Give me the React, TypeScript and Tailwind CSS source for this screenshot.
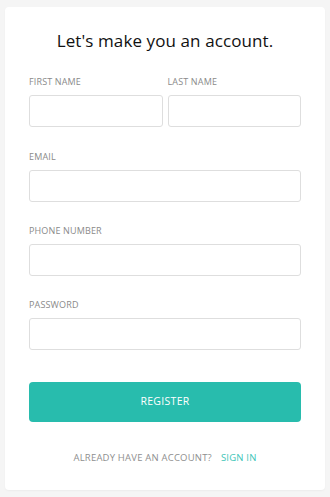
import { useState } from 'react';

const Field = ({ label, type = 'text' }: { label: string; type?: string }) => (
  <div className="flex flex-col flex-1 min-w-0">
    <label className="text-[9px] leading-[12px] text-[#8a8a8a] tracking-[0.15px] mb-[7px]">{label}</label>
    <input
      type={type}
      className="h-[32px] w-full rounded-[3px] border border-[#dedede] bg-white px-2 text-sm outline-none"
    />
  </div>
);

const App = () => {
  const [submitted, setSubmitted] = useState(false);

  return (
    <div
      className="min-h-[497px] w-full bg-[#f5f5f5] px-[5px] pt-[7px] pb-[7px]"
      style={{ fontFamily: '"Open Sans", "Liberation Sans", sans-serif' }}
    >
      <form
        onSubmit={(e) => {
          e.preventDefault();
          setSubmitted(!submitted);
        }}
        className="h-[483px] rounded-[4px] bg-white px-[24px] pt-[22px] shadow-[0_1px_2px_rgba(0,0,0,0.04)]"
      >
        <h1 className="text-center text-[17px] leading-[24px] tracking-[0.1px] text-[#111] mb-[23px]">
          Let's make you an account.
        </h1>

        <div className="flex gap-[5px] mb-[24px]">
          <Field label="FIRST NAME" />
          <Field label="LAST NAME" />
        </div>
        <div className="mb-[23px]">
          <Field label="EMAIL" type="email" />
        </div>
        <div className="mb-[23px]">
          <Field label="PHONE NUMBER" type="tel" />
        </div>
        <div className="mb-[32px]">
          <Field label="PASSWORD" type="password" />
        </div>

        <button
          type="submit"
          className="h-[40px] w-full rounded-[4px] bg-[#28bcad] text-[10.5px] tracking-[0.3px] text-white"
        >
          REGISTER
        </button>

        <p className="mt-[30px] text-center text-[9.5px] leading-[12px] tracking-[0.2px] text-[#8f8f8f]">
          ALREADY HAVE AN ACCOUNT?
          <a href="#" className="ml-[9px] text-[#3cc5b7]">
            SIGN IN
          </a>
        </p>
      </form>
    </div>
  );
};

export default App;
